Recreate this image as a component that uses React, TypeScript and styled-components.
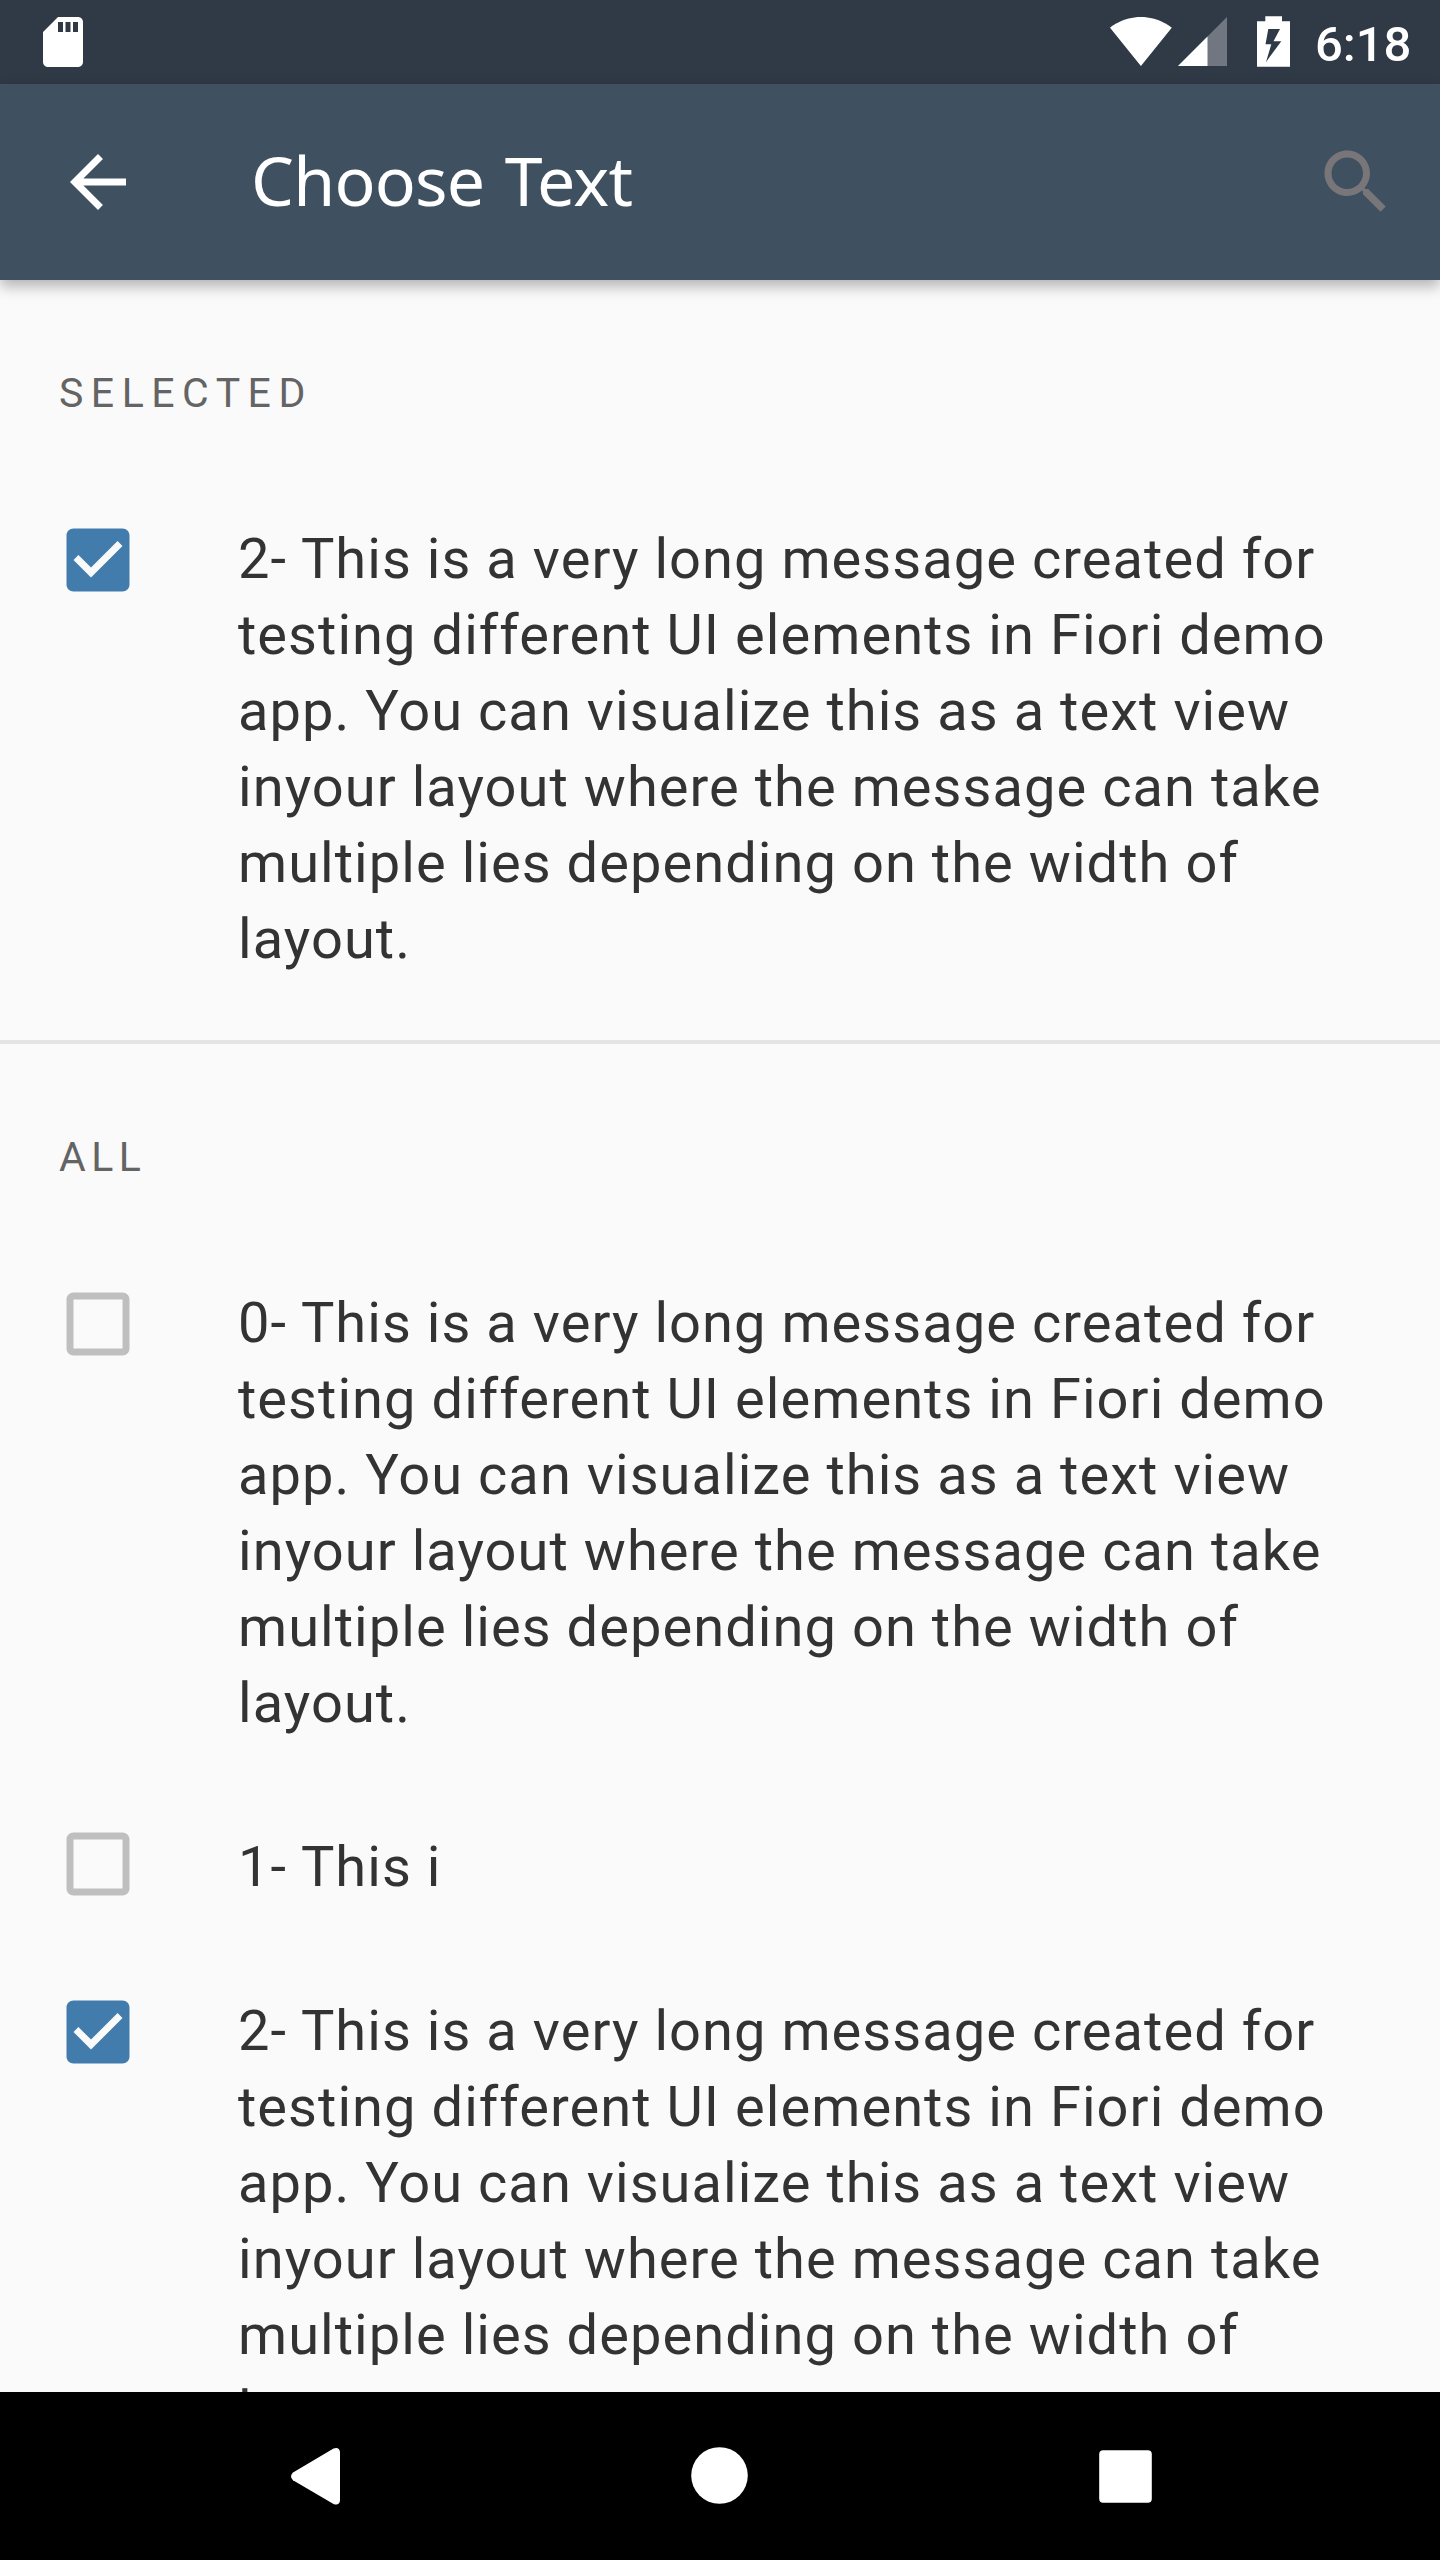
import React from "react";
import styled, { createGlobalStyle } from "styled-components";

const GlobalStyle = createGlobalStyle`
  *, *::before, *::after { box-sizing: border-box; }
  body { margin: 0; background: #fafafa; }
`;

const Screen = styled.div`
  display: flex;
  flex-direction: column;
  width: 1440px;
  height: 2560px;
  overflow: hidden;
  background: #fafafa;
  color: #333333;
  font-family: Roboto, sans-serif;
`;

const StatusBar = styled.header`
  display: flex;
  flex: none;
  align-items: flex-start;
  height: 84px;
  padding: 0 29px 0 33px;
  background: #2f3a46;
`;

const StatusIcon = styled.svg<{ $gap?: number }>`
  display: block;
  flex: none;
  margin-left: ${(p) => p.$gap ?? 0}px;
`;

const Spacer = styled.div`
  flex: 1;
`;

const Clock = styled.time`
  width: 96px;
  margin-left: 25px;
  padding-top: 16px;
  font-size: 49px;
  font-weight: 500;
  line-height: 57px;
  color: #ffffff;
  white-space: nowrap;
`;

const AppBar = styled.div`
  display: flex;
  flex: none;
  align-items: center;
  height: 196px;
  padding: 0 42px 0 56px;
  background: #3f5060;
  z-index: 1;
  box-shadow: 0 6px 14px rgba(0, 0, 0, 0.3);
`;

const IconButton = styled.button`
  display: flex;
  flex: none;
  width: 84px;
  height: 84px;
  padding: 0;
  border: 0;
  background: none;
`;

const Title = styled.h1`
  flex: 1;
  margin: 0 0 4px 111px;
  font-family: "Noto Sans", sans-serif;
  font-size: 68px;
  font-weight: 400;
  line-height: 92px;
  letter-spacing: -0.8px;
  word-spacing: 3.5px;
  color: #ffffff;
  white-space: nowrap;
`;

const List = styled.main`
  flex: 1;
  min-height: 0;
  overflow: hidden;
`;

const SectionHeader = styled.h2<{ $tracking: number }>`
  height: 196px;
  margin: 0;
  padding: 85px 59px 0;
  font-size: 41px;
  font-weight: 400;
  line-height: 56px;
  letter-spacing: ${(p) => p.$tracking}px;
  color: #646464;
`;

const Divider = styled.hr`
  height: 4px;
  margin: 24px 0 0;
  border: 0;
  background: #e4e4e4;
`;

const Row = styled.label`
  display: flex;
  align-items: center;
  min-height: 168px;
  padding: 42px 84px 42px 56px;
`;

const CheckIcon = styled.svg`
  display: block;
  flex: none;
  align-self: flex-start;
`;

const Message = styled.span`
  width: 1120px;
  margin-left: 98px;
  padding-top: 3px;
  margin-bottom: -3px;
  font-size: 56px;
  line-height: 76px;
  letter-spacing: 1.05px;
`;

const NavBar = styled.nav`
  display: flex;
  flex: none;
  justify-content: center;
  align-items: center;
  gap: 322px;
  height: 168px;
  background: #000000;
`;

const LONG =
  "This is a very long message created for testing different UI elements in Fiori demo app. You can visualize this as a text view inyour layout where the message can take multiple lies depending on the width of layout.";

function Checkbox({ checked }: { checked: boolean }) {
  return (
    <CheckIcon width="84" height="84" viewBox="0 0 24 24">
      {checked ? (
        <path
          fill="#427cac"
          d="M19 3H5c-1.11 0-2 .9-2 2v14c0 1.1.89 2 2 2h14c1.11 0 2-.9 2-2V5c0-1.1-.89-2-2-2zm-9 14l-5-5 1.41-1.41L10 14.17l7.59-7.59L19 8l-9 9z"
        />
      ) : (
        <path
          fill="#bfbfbf"
          d="M19 5v14H5V5h14m0-2H5c-1.1 0-2 .9-2 2v14c0 1.1.9 2 2 2h14c1.1 0 2-.9 2-2V5c0-1.1-.9-2-2-2z"
        />
      )}
    </CheckIcon>
  );
}

function Option({ checked = false, text }: { checked?: boolean; text: string }) {
  return (
    <Row>
      <Checkbox checked={checked} />
      <Message>{text}</Message>
    </Row>
  );
}

export default function App() {
  return (
    <>
      <GlobalStyle />
      <Screen>
        <StatusBar>
          <StatusIcon width="60" height="84" viewBox="0 0 60 84">
            <path
              transform="translate(0 12) scale(2.5)"
              fill="#fff"
              d="M18 2h-8L4 8v12c0 1.1.9 2 2 2h12c1.1 0 2-.9 2-2V4c0-1.1-.9-2-2-2zm-6 6h-2V4h2v4zm3 0h-2V4h2v4zm3 0h-2V4h2v4z"
            />
          </StatusIcon>
          <Spacer />
          <StatusIcon width="62" height="84" viewBox="1110 0 62 84">
            <path
              transform="translate(1109.1 9.1) scale(2.65)"
              fill="#fff"
              d="M12.01 21.49L23.64 7c-.45-.34-4.93-4-11.64-4C5.28 3 .81 6.66.36 7l11.63 14.49.01.01.01-.01z"
            />
          </StatusIcon>
          <StatusIcon width="49" height="84" viewBox="1178 0 49 84" $gap={6}>
            <path fill="#707780" d="M1178 66L1227 17V66z" />
            <path fill="#fff" d="M1178 66L1207.5 36.5V66z" />
          </StatusIcon>
          <StatusIcon width="33" height="84" viewBox="1257 0 33 84" $gap={30}>
            <path
              fill="#fff"
              fillRule="evenodd"
              d="M1265.3 16.3H1282V21.2H1290V66.7H1257V21.2H1265.3zM1268.3 29L1265.5 44.3H1271.3L1266 62L1281.3 41.2H1273.5L1280 29z"
            />
          </StatusIcon>
          <Clock>6:18</Clock>
        </StatusBar>
        <AppBar>
          <IconButton aria-label="Back">
            <svg width="84" height="84" viewBox="0 0 24 24">
              <path
                fill="#fff"
                d="M20 11H7.83l5.59-5.59L12 4l-8 8 8 8 1.41-1.41L7.83 13H20v-2z"
              />
            </svg>
          </IconButton>
          <Title>Choose Text</Title>
          <IconButton aria-label="Search">
            <svg width="84" height="84" viewBox="0 0 24 24">
              <path
                fill="#79767a"
                d="M15.5 14h-.79l-.28-.27C15.41 12.59 16 11.11 16 9.5 16 5.91 13.09 3 9.5 3S3 5.91 3 9.5 5.91 16 9.5 16c1.61 0 3.09-.59 4.23-1.57l.27.28v.79l5 4.99L20.49 19l-4.99-5zm-6 0C7.01 14 5 11.99 5 9.5S7.01 5 9.5 5 14 7.01 14 9.5 11.99 14 9.5 14z"
              />
            </svg>
          </IconButton>
        </AppBar>
        <List>
          <SectionHeader $tracking={7.5}>SELECTED</SectionHeader>
          <Option checked text={`2- ${LONG}`} />
          <Divider />
          <SectionHeader $tracking={5.4}>ALL</SectionHeader>
          <Option text={`0- ${LONG}`} />
          <Option text="1- This i" />
          <Option checked text={`2- ${LONG}`} />
        </List>
        <NavBar>
          <svg width="84" height="84" viewBox="0 0 84 84">
            <path
              fill="#fff"
              d="M21 38.6L61.5 14.6Q67.2 12.6 68 18V66.5Q67.2 71.9 61.5 69.9L21 46.2Q17 42.4 21 38.6z"
            />
          </svg>
          <svg width="84" height="84" viewBox="0 0 84 84">
            <circle cx="41.5" cy="41.5" r="28.3" fill="#fff" />
          </svg>
          <svg width="84" height="84" viewBox="0 0 84 84">
            <rect x="15.2" y="16.2" width="52.6" height="52.6" rx="4" fill="#fff" />
          </svg>
        </NavBar>
      </Screen>
    </>
  );
}
